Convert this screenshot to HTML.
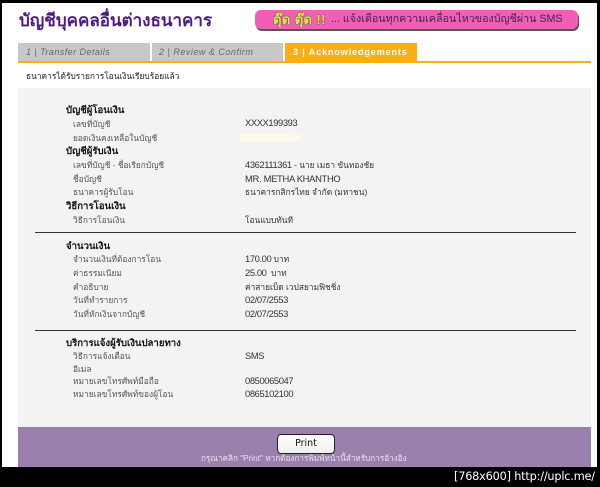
<!DOCTYPE html>
<html><head><meta charset="utf-8">
<style>
html,body{margin:0;padding:0;background:#000;}
#p{position:relative;width:600px;height:487px;overflow:hidden;background:#000;font-family:"Liberation Sans","WenQuanYi Zen Hei","Noto Sans CJK SC",sans-serif;font-size:8.4px;color:#333;}
.a{position:absolute;white-space:nowrap;}
.t{position:absolute;white-space:nowrap;line-height:12px;height:12px;}
.h{left:66px;font-weight:bold;color:#111;font-size:9.6px;margin-top:1px;}
.l{left:73px;color:#555;}
.v{left:245px;color:#333;}
.n{font-size:9.4px;letter-spacing:-.4px;position:relative;top:1px;}
.ln{position:absolute;left:35px;width:541px;height:1px;background:#333;}
.tab{position:absolute;top:43px;height:18px;line-height:18px;font-size:9px;}
</style></head><body><div id="p">
<div class="a" style="left:2px;top:3px;width:595px;height:464px;background:#fff;"></div>

<div class="a" style="left:19px;top:6px;font-size:17px;line-height:30px;color:#4b1a86;font-weight:bold;">บัญชีบุคคลอื่นต่างธนาคาร</div>

<div class="a" style="left:255px;top:10px;width:323px;height:19px;background:#f05fb4;border-radius:6px;box-shadow:1px 2px 0 #555;"></div>
<div class="a" style="left:273px;top:10px;font-size:13px;line-height:19px;font-weight:bold;color:#dfe84a;text-shadow:0 0 1px #3f4a12,0 0 1px #3f4a12;letter-spacing:.4px;">ตุ๊ด ตุ๊ด !!</div>
<div class="a" style="left:331px;top:12px;font-size:10.7px;line-height:15px;color:#4a2350;">... แจ้งเตือนทุกความเคลื่อนไหวของบัญชีผ่าน SMS</div>

<div class="tab" style="left:18px;width:132px;background:#c8c8c8;color:#666;font-style:italic;text-indent:8px;letter-spacing:.45px;">1 | Transfer Details</div>
<div class="tab" style="left:152px;width:131px;background:#c8c8c8;color:#666;font-style:italic;text-indent:7px;letter-spacing:.5px;">2 | Review &amp; Confirm</div>
<div class="tab" style="left:285px;width:132px;background:#fdae12;color:#fff;font-weight:bold;text-indent:8px;letter-spacing:.9px;">3 | Acknowledgements</div>
<div class="a" style="left:18px;top:61px;width:573px;height:2px;background:#fdae12;"></div>

<div class="t" style="left:26px;top:70px;color:#222;">ธนาคารได้รับรายการโอนเงินเรียบร้อยแล้ว</div>

<div class="a" style="left:18px;top:88px;width:573px;height:339px;background:#f3f3f3;"></div>

<div class="t h" style="top:104px;">บัญชีผู้โอนเงิน</div>
<div class="t l" style="top:118px;">เลขที่บัญชี</div>
<div class="t v n" style="top:117px;position:absolute;">XXXX199393</div>
<div class="t l" style="top:132px;">ยอดเงินคงเหลือในบัญชี</div>
<div class="a" style="left:240px;top:134px;width:60px;height:7px;background:#fff8e8;"></div>
<div class="t h" style="top:145px;">บัญชีผู้รับเงิน</div>
<div class="t l" style="top:159px;">เลขที่บัญชี - ชื่อเรียกบัญชี</div>
<div class="t v" style="top:159px;"><span class="n" style="top:0">4362111361</span> - นาย เมธา ขันทองชัย</div>
<div class="t l" style="top:173px;">ชื่อบัญชี</div>
<div class="t v n" style="top:173px;position:absolute;letter-spacing:-.3px;">MR. METHA KHANTHO</div>
<div class="t l" style="top:186px;">ธนาคารผู้รับโอน</div>
<div class="t v" style="top:186px;">ธนาคารกสิกรไทย จำกัด (มหาชน)</div>
<div class="t h" style="top:200px;">วิธีการโอนเงิน</div>
<div class="t l" style="top:214px;">วิธีการโอนเงิน</div>
<div class="t v" style="top:214px;">โอนแบบทันที</div>

<div class="ln" style="top:232px;"></div>

<div class="t h" style="top:240px;">จำนวนเงิน</div>
<div class="t l" style="top:253px;">จำนวนเงินที่ต้องการโอน</div>
<div class="t v" style="top:253px;"><span class="n" style="top:0">170.00</span> บาท</div>
<div class="t l" style="top:267px;">ค่าธรรมเนียม</div>
<div class="t v" style="top:267px;"><span class="n" style="top:0">25.00</span> &nbsp;บาท</div>
<div class="t l" style="top:281px;">คำอธิบาย</div>
<div class="t v" style="top:281px;">ค่าสายเบ็ด เวปสยามฟิชชิ่ง</div>
<div class="t l" style="top:294px;">วันที่ทำรายการ</div>
<div class="t v n" style="top:294px;position:absolute;">02/07/2553</div>
<div class="t l" style="top:308px;">วันที่หักเงินจากบัญชี</div>
<div class="t v n" style="top:308px;position:absolute;">02/07/2553</div>

<div class="ln" style="top:330px;"></div>

<div class="t h" style="top:337px;">บริการแจ้งผู้รับเงินปลายทาง</div>
<div class="t l" style="top:350px;">วิธีการแจ้งเตือน</div>
<div class="t v n" style="top:350px;position:absolute;">SMS</div>
<div class="t l" style="top:363px;">อีเมล</div>
<div class="t l" style="top:375px;">หมายเลขโทรศัพท์มือถือ</div>
<div class="t v n" style="top:375px;position:absolute;">0850065047</div>
<div class="t l" style="top:388px;">หมายเลขโทรศัพท์ของผู้โอน</div>
<div class="t v n" style="top:388px;position:absolute;">0865102100</div>

<div class="a" style="left:18px;top:427px;width:573px;height:40px;background:#9b80ae;"></div>
<div class="a" style="left:277px;top:434px;width:56px;height:18px;background:linear-gradient(#fff,#f0f0ee);border:1px solid #222;border-radius:4px;text-align:center;line-height:18px;font-size:9.5px;color:#111;font-family:'DejaVu Sans',sans-serif;">Print</div>
<div class="t" style="left:201px;top:453px;color:#e8e2ee;font-size:8.2px;">กรุณาคลิก "Print" หากต้องการพิมพ์หน้านี้สำหรับการอ้างอิง</div>

<div class="a" style="left:454px;top:469px;font-size:11.3px;line-height:16px;color:#fff;font-family:'DejaVu Sans',sans-serif;letter-spacing:-.2px;">[768x600] http://uplc.me/</div>
</div></body></html>
